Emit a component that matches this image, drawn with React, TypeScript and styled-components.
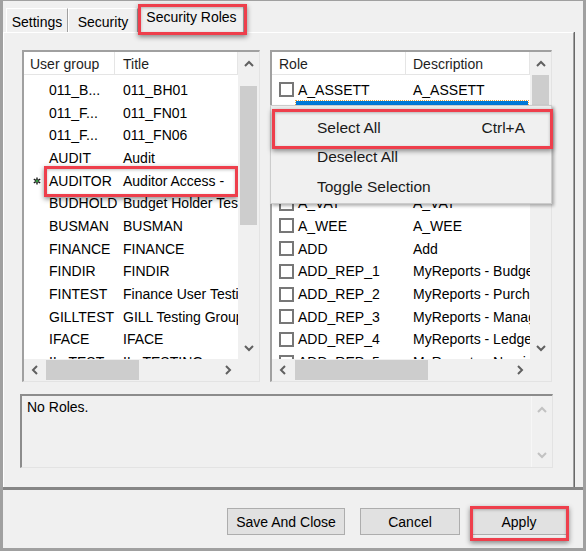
import React from 'react';
import styled, { createGlobalStyle, css } from 'styled-components';

// data
const groups: Array<[string, string, boolean?]> = [
  ['011_B...', '011_BH01'],
  ['011_F...', '011_FN01'],
  ['011_F...', '011_FN06'],
  ['AUDIT', 'Audit'],
  ['AUDITOR', 'Auditor Access -', true],
  ['BUDHOLD', 'Budget Holder Testing'],
  ['BUSMAN', 'BUSMAN'],
  ['FINANCE', 'FINANCE'],
  ['FINDIR', 'FINDIR'],
  ['FINTEST', 'Finance User Testing'],
  ['GILLTEST', 'GILL Testing Group'],
  ['IFACE', 'IFACE'],
  ['IL_TEST', 'IL_TESTING'],
];

const roles: Array<[string, string]> = [
  ['A_ASSETT', 'A_ASSETT'],
  ['A_BANK', 'A_BANK'],
  ['A_CASH', 'A_CASH'],
  ['A_GL', 'A_GL'],
  ['A_PURCH', 'A_PURCH'],
  ['A_VAT', 'A_VAT'],
  ['A_WEE', 'A_WEE'],
  ['ADD', 'Add'],
  ['ADD_REP_1', 'MyReports - Budget'],
  ['ADD_REP_2', 'MyReports - Purchasing'],
  ['ADD_REP_3', 'MyReports - Management'],
  ['ADD_REP_4', 'MyReports - Ledger'],
  ['ADD_REP_5', 'MyReports - Nominal'],
];

type Dir = 'up' | 'down' | 'left' | 'right';

const chevron: Record<Dir, string> = {
  up: '1,7 5,3 9,7',
  down: '1,3 5,7 9,3',
  left: '7,1 3,5 7,9',
  right: '3,1 7,5 3,9',
};

function Chevron({ dir, color = '#606060' }: { dir: Dir; color?: string }) {
  return (
    <svg width="10" height="10" viewBox="0 0 10 10">
      <polyline points={chevron[dir]} fill="none" stroke={color} strokeWidth="2" />
    </svg>
  );
}

function Star() {
  return (
    <svg width="8" height="8" viewBox="0 0 8 8">
      <path d="M4 0.5V7.5M0.8 2.2L7.2 5.8M0.8 5.8L7.2 2.2" stroke="#1a1a1a" strokeWidth="1.4" />
      <circle cx="4" cy="4" r="1.3" fill="#2f9a3a" />
    </svg>
  );
}

export default function App(): JSX.Element {
  return (
    <>
      <GlobalStyle />
      <Window>
        <TabStrip>
          <Tab $width={62}>Settings</Tab>
          <Tab $width={70}>Security</Tab>
          <Tab $width={105} $active $mark="-2px -4px -2px -2px">
            Security Roles
          </Tab>
        </TabStrip>

        <Panel>
          <ListsRow>
            <ListBox $width={238}>
              <ListMain>
                <Header $col={91}>
                  <HeadCell>User group</HeadCell>
                  <HeadCell $pad={8}>Title</HeadCell>
                </Header>
                <Rows>
                  {groups.map(([name, title, current]) => (
                    <GroupRow key={name + title} $mark={current ? '-3px 0 -5px 20px' : undefined}>
                      <StarCell>{current && <Star />}</StarCell>
                      <Cell>{name}</Cell>
                      <Cell $pad={8}>{title}</Cell>
                    </GroupRow>
                  ))}
                </Rows>
              </ListMain>
              <VScroll>
                <ArrowBox $tall={23}>
                  <Chevron dir="up" />
                </ArrowBox>
                <VTrack>
                  <VThumb $offset={11} $size={139} />
                </VTrack>
                <ArrowBox $tall={22}>
                  <Chevron dir="down" />
                </ArrowBox>
              </VScroll>
              <HScroll>
                <ArrowBox>
                  <Chevron dir="left" />
                </ArrowBox>
                <HTrack>
                  <HThumb $offset={1} $size={93} />
                </HTrack>
                <ArrowBox>
                  <Chevron dir="right" />
                </ArrowBox>
              </HScroll>
              <Corner />
            </ListBox>

            <ListBox $width={282}>
              <ListMain>
                <Header $col={134}>
                  <HeadCell $pad={7}>Role</HeadCell>
                  <HeadCell $pad={7}>Description</HeadCell>
                </Header>
                <Rows>
                  {roles.map(([role, desc], i) => (
                    <RoleRow key={role}>
                      <Check />
                      <RoleCells $selected={i === 1}>
                        <Cell>{role}</Cell>
                        <Cell $pad={5}>{desc}</Cell>
                      </RoleCells>
                    </RoleRow>
                  ))}
                </Rows>
              </ListMain>
              <VScroll>
                <ArrowBox $tall={23}>
                  <Chevron dir="up" />
                </ArrowBox>
                <VTrack>
                  <VThumb $offset={0} $size={115} />
                </VTrack>
                <ArrowBox $tall={22}>
                  <Chevron dir="down" />
                </ArrowBox>
              </VScroll>
              <HScroll>
                <ArrowBox>
                  <Chevron dir="left" />
                </ArrowBox>
                <HTrack>
                  <HThumb $offset={2} $size={133} />
                </HTrack>
                <ArrowBox>
                  <Chevron dir="right" />
                </ArrowBox>
              </HScroll>
              <Corner />

              <Menu>
                <MenuItem $mark="-4.5px -2px -6px 0">
                  <span>Select All</span>
                  <span>Ctrl+A</span>
                </MenuItem>
                <MenuItem>
                  <span>Deselect All</span>
                </MenuItem>
                <MenuItem>
                  <span>Toggle Selection</span>
                </MenuItem>
              </Menu>
            </ListBox>
          </ListsRow>

          <Memo>
            <MemoText>No Roles.</MemoText>
            <MemoScroll>
              <Chevron dir="up" color="#c2c2c2" />
              <Chevron dir="down" color="#c2c2c2" />
            </MemoScroll>
          </Memo>
        </Panel>

        <ButtonBar>
          <Button $width={118}>Save And Close</Button>
          <Button $width={100}>Cancel</Button>
          <Button $width={96} $gap={11} $mark="-3px -3px -7px -2px">
            Apply
          </Button>
        </ButtonBar>
      </Window>
    </>
  );
}

// styles
const GlobalStyle = createGlobalStyle`
  html, body {
    margin: 0;
    padding: 0;
    background: #f0f0f0;
  }
  body {
    font-family: "Liberation Sans", Arial, sans-serif;
    font-size: 14px;
    color: #000;
  }
  * {
    box-sizing: border-box;
  }
`;

const redMark = css<{ $mark?: string }>`
  position: relative;
  ${({ $mark }) =>
    $mark &&
    css`
      &::after {
        content: '';
        position: absolute;
        inset: ${$mark};
        border: 3px solid #ee3f4c;
        box-shadow: 0 2px 5px rgba(0, 0, 0, 0.45), inset 0 1px 3px rgba(0, 0, 0, 0.25);
        pointer-events: none;
        z-index: 5;
      }
    `}
`;

const Window = styled.div`
  width: 586px;
  height: 551px;
  display: flex;
  flex-direction: column;
  background: #f0f0f0;
  border: 3px solid #a0a0a0;
  border-top-width: 1px;
  overflow: hidden;
`;

const TabStrip = styled.div`
  height: 31px;
  display: flex;
  align-items: flex-end;
  padding-left: 3px;
  position: relative;
  z-index: 2;
`;

const Tab = styled.div<{ $width: number; $active?: boolean; $mark?: string }>`
  ${redMark};
  width: ${({ $width }) => $width}px;
  height: ${({ $active }) => ($active ? '28px' : '24px')};
  margin: ${({ $active }) => ($active ? '0 0 -1px 1px' : '0')};
  padding-top: ${({ $active }) => ($active ? '2px' : '4px')};
  background: #f0f0f0;
  border-top: 1px solid #fff;
  border-left: 1px solid #fff;
  border-right: 1px solid #a0a0a0;
  box-shadow: 1px 0 0 #696969;
  text-align: center;
  white-space: nowrap;
  line-height: 18px;
`;

const Panel = styled.div`
  flex: 1;
  margin-right: 9px;
  padding: 17px 0 0 16px;
  border-top: 1px solid #fff;
  border-left: 1px solid #fff;
  border-right: 1px solid #a0a0a0;
  box-shadow: 1px 0 0 #696969;
  display: flex;
  flex-direction: column;
`;

const ListsRow = styled.div`
  display: flex;
  gap: 10px;
  padding-left: 2px;
  height: 332px;
`;

const ListBox = styled.div<{ $width: number }>`
  position: relative;
  width: ${({ $width }) => $width}px;
  display: grid;
  grid-template-columns: 1fr 21px;
  grid-template-rows: 1fr 22px;
  border-top: 2px solid #a0a0a0;
  border-left: 2px solid #a0a0a0;
  border-right: 1px solid #e3e3e3;
  border-bottom: 1px solid #e3e3e3;
  background: #fff;
`;

const ListMain = styled.div`
  display: flex;
  flex-direction: column;
  overflow: hidden;
  background: #fff;
`;

const Header = styled.div<{ $col: number }>`
  height: 23px;
  flex: none;
  display: grid;
  grid-template-columns: ${({ $col }) => $col}px 1fr;
  border-bottom: 1px solid #e5e5e5;
  background: #fff;
`;

const HeadCell = styled.div<{ $pad?: number }>`
  padding-left: ${({ $pad }) => $pad ?? 6}px;
  line-height: 25px;
  border-right: 1px solid #e5e5e5;
  color: #1e1e1e;
  white-space: nowrap;
  overflow: hidden;
`;

const Rows = styled.div`
  flex: 1;
  padding-top: 3.5px;
  overflow: hidden;
`;

const GroupRow = styled.div<{ $mark?: string }>`
  ${redMark};
  height: 22.7px;
  display: grid;
  grid-template-columns: 25px 66px 1fr;
  align-items: center;
  white-space: nowrap;
`;

const StarCell = styled.div`
  display: flex;
  padding-left: 9px;
`;

const Cell = styled.div<{ $pad?: number }>`
  padding-left: ${({ $pad }) => $pad ?? 0}px;
  white-space: nowrap;
`;

const RoleRow = styled.div`
  height: 22.7px;
  display: flex;
  align-items: center;
  white-space: nowrap;
`;

const Check = styled.div`
  flex: none;
  width: 15px;
  height: 15px;
  margin: 0 2px 0 7px;
  border: 2px solid #777;
  background: #fff;
`;

const RoleCells = styled.div<{ $selected?: boolean }>`
  flex: 1;
  height: 100%;
  display: grid;
  grid-template-columns: 110px 1fr;
  align-items: center;
  padding-left: 2px;
  margin-right: 2px;
  background: ${({ $selected }) => ($selected ? '#0078d7' : 'transparent')};
  color: ${({ $selected }) => ($selected ? '#fff' : '#000')};
  outline: ${({ $selected }) => ($selected ? '1px dotted #e0a040' : 'none')};
`;

const VScroll = styled.div`
  display: flex;
  flex-direction: column;
  background: #f0f0f0;
`;

const ArrowBox = styled.div<{ $tall?: number }>`
  flex: none;
  width: 21px;
  height: ${({ $tall }) => $tall ?? 22}px;
  display: flex;
  align-items: center;
  justify-content: center;
`;

const VTrack = styled.div`
  flex: 1;
  padding: 0 2px;
`;

const VThumb = styled.div<{ $offset: number; $size: number }>`
  margin-top: ${({ $offset }) => $offset}px;
  height: ${({ $size }) => $size}px;
  background: #cdcdcd;
`;

const HScroll = styled.div`
  display: flex;
  background: #f0f0f0;
`;

const HTrack = styled.div`
  flex: 1;
  padding: 1px 0;
  display: flex;
`;

const HThumb = styled.div<{ $offset: number; $size: number }>`
  margin-left: ${({ $offset }) => $offset}px;
  width: ${({ $size }) => $size}px;
  background: #cdcdcd;
`;

const Corner = styled.div`
  background: #f0f0f0;
`;

const Menu = styled.div`
  position: absolute;
  left: -2px;
  top: 53px;
  width: 282px;
  height: 99px;
  padding: 7px 0 3px 1px;
  background: #f0f0f0;
  border: 1px solid #cccccc;
  box-shadow: 2px 2px 3px rgba(0, 0, 0, 0.3);
  z-index: 4;
`;

const MenuItem = styled.div<{ $mark?: string }>`
  ${redMark};
  height: 29.5px;
  display: flex;
  align-items: center;
  justify-content: space-between;
  padding: 0 26px 0 45px;
  font-size: 15.5px;
  color: #1a1a1a;
`;

const Memo = styled.div`
  margin-top: 12px;
  width: 533px;
  height: 74px;
  display: flex;
  border-top: 2px solid #8c8c8c;
  border-left: 2px solid #8c8c8c;
  border-right: 1px solid #e3e3e3;
  border-bottom: 1px solid #e3e3e3;
  background: #f0f0f0;
`;

const MemoText = styled.div`
  flex: 1;
  padding: 3px 5px;
  line-height: 16px;
`;

const MemoScroll = styled.div`
  width: 21px;
  display: flex;
  flex-direction: column;
  align-items: center;
  justify-content: space-between;
  padding: 9px 0 7px;
  border-left: 1px solid #f7f7f7;
`;

const ButtonBar = styled.div`
  height: 61px;
  flex: none;
  display: flex;
  justify-content: flex-end;
  align-items: flex-start;
  padding: 18px 16px 0 0;
  border-top: 3px solid #868686;
`;

const Button = styled.button<{ $width: number; $gap?: number; $mark?: string }>`
  ${redMark};
  width: ${({ $width }) => $width}px;
  height: 27px;
  margin-left: ${({ $gap }) => $gap ?? 15}px;
  padding: 0;
  background: #e1e1e1;
  border: 1px solid #adadad;
  font-family: "Liberation Sans", Arial, sans-serif;
  font-size: 14px;
  color: #000;
`;
